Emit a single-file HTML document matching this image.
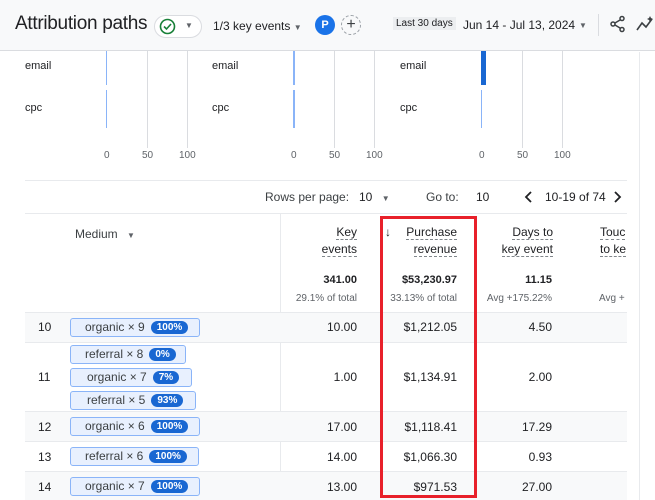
<!DOCTYPE html><html><head><style>
*{margin:0;padding:0;box-sizing:border-box}
body{width:655px;height:500px;overflow:hidden;background:#fff;font-family:"Liberation Sans",sans-serif;color:#202124;position:relative}
.a{position:absolute}
.hdr{left:0;top:0;width:655px;height:51px;background:#f8f9fa;border-bottom:1px solid #dadce0}
.t{font-size:12px}
.g{background:#dadce0;width:1px}
.ax{font-size:10px;color:#5f6368}
.chip{position:absolute;height:19px;border:1px solid #8ab4f8;background:#e8f0fe;border-radius:3px;font-size:12px;line-height:17px;padding-left:14px;color:#3c4043;white-space:nowrap}
.pill{display:inline-block;background:#1967d2;color:#fff;font-size:10px;font-weight:bold;border-radius:8px;padding:0 6px;line-height:13px;margin-left:6px;vertical-align:1px}
.r{text-align:right;font-size:12px}
.row{left:25px;width:602px;border-top:1px solid #e8eaed}
.dash{border-bottom:1px dashed #80868b;display:inline-block;line-height:14px;margin-bottom:2px}
</style></head><body>
<div class="a hdr"></div>
<div class="a" style="left:15px;top:13px;font-size:19px;letter-spacing:-0.3px">Attribution paths</div>
<div class="a" style="left:154px;top:15px;width:48px;height:23px;border:1px solid #dadce0;border-radius:12px;background:#fff"></div>
<svg class="a" style="left:159px;top:18px" width="17" height="17"><circle cx="8.5" cy="8.5" r="7" fill="none" stroke="#188038" stroke-width="1.6"/><path d="M5 8.5l2.5 2.5 4.5-5" fill="none" stroke="#188038" stroke-width="1.6"/></svg>
<div class="a" style="left:185px;top:21px;font-size:8px;color:#5f6368">▼</div>
<div class="a t" style="left:213px;top:19px">1/3 key events <span style="font-size:8px;color:#5f6368">▼</span></div>
<div class="a" style="left:315px;top:15px;width:20px;height:20px;background:#1a73e8;border-radius:50%;color:#fff;font-size:11px;text-align:center;line-height:20px;font-weight:bold">P</div>
<div class="a" style="left:341px;top:15px;width:20px;height:20px;border:1px dashed #9aa0a6;border-radius:50%;text-align:center;line-height:17px;font-size:16px;color:#3c4043">+</div>
<div class="a" style="left:393px;top:17px;background:#eceef0;font-size:10px;padding:1px 3px">Last 30 days</div>
<div class="a t" style="left:463px;top:18px">Jun 14 - Jul 13, 2024</div>
<div class="a" style="left:579px;top:21px;font-size:8px;color:#5f6368">▼</div>
<div class="a g" style="left:598px;top:14px;height:22px"></div>
<svg class="a" style="left:609px;top:15px" width="18" height="18"><circle cx="13" cy="3.5" r="2" fill="none" stroke="#3c4043" stroke-width="1.5"/><circle cx="4" cy="9" r="2" fill="none" stroke="#3c4043" stroke-width="1.5"/><circle cx="13" cy="14.5" r="2" fill="none" stroke="#3c4043" stroke-width="1.5"/><path d="M6 8L11 5M6 10L11 13" stroke="#3c4043" stroke-width="1.5"/></svg>
<svg class="a" style="left:636px;top:15px" width="19" height="18"><path d="M1 15L6 8L10 12L16 4" fill="none" stroke="#3c4043" stroke-width="1.6"/><path d="M14 1l1 2 2 1-2 1-1 2-1-2-2-1 2-1z" fill="#3c4043"/></svg>
<div class="a" style="left:639px;top:52px;width:1px;height:448px;background:#e8eaed"></div>

<div class="a t" style="left:25px;top:60px;font-size:11px">email</div><div class="a t" style="left:25px;top:102px;font-size:11px">cpc</div>
<div class="a t" style="left:212px;top:60px;font-size:11px">email</div><div class="a t" style="left:212px;top:102px;font-size:11px">cpc</div>
<div class="a t" style="left:400px;top:60px;font-size:11px">email</div><div class="a t" style="left:400px;top:102px;font-size:11px">cpc</div>
<div class="a g" style="left:147px;top:51px;height:97px"></div><div class="a g" style="left:187px;top:51px;height:97px"></div>
<div class="a g" style="left:334px;top:51px;height:97px"></div><div class="a g" style="left:374px;top:51px;height:97px"></div>
<div class="a g" style="left:522px;top:51px;height:97px"></div><div class="a g" style="left:562px;top:51px;height:97px"></div>
<div class="a" style="left:106px;top:51px;width:1px;height:34px;background:#8ab4f8"></div><div class="a" style="left:106px;top:90px;width:1px;height:38px;background:#8ab4f8"></div>
<div class="a" style="left:293px;top:51px;width:2px;height:34px;background:#8ab4f8"></div><div class="a" style="left:293px;top:90px;width:2px;height:38px;background:#8ab4f8"></div>
<div class="a" style="left:481px;top:51px;width:5px;height:34px;background:#1967d2"></div><div class="a" style="left:481px;top:90px;width:1px;height:38px;background:#8ab4f8"></div>
<div class="a ax" style="left:104px;top:150px">0</div><div class="a ax" style="left:142px;top:150px">50</div><div class="a ax" style="left:179px;top:150px">100</div>
<div class="a ax" style="left:291px;top:150px">0</div><div class="a ax" style="left:329px;top:150px">50</div><div class="a ax" style="left:366px;top:150px">100</div>
<div class="a ax" style="left:479px;top:150px">0</div><div class="a ax" style="left:517px;top:150px">50</div><div class="a ax" style="left:554px;top:150px">100</div>
<div class="a" style="left:25px;top:180px;width:602px;height:1px;background:#e8eaed"></div>

<div class="a t" style="left:265px;top:190px;color:#3c4043">Rows per page:</div>
<div class="a t" style="left:359px;top:190px">10 <span style="font-size:8px;color:#5f6368;margin-left:6px">▼</span></div>
<div class="a t" style="left:426px;top:190px;color:#3c4043">Go to:</div>
<div class="a t" style="left:476px;top:190px">10</div>
<svg class="a" style="left:524px;top:190px" width="10" height="14"><path d="M7 2L2 7l5 5" fill="none" stroke="#202124" stroke-width="1.8"/></svg>
<div class="a t" style="left:545px;top:190px">10-19 of 74</div>
<svg class="a" style="left:612px;top:190px" width="10" height="14"><path d="M3 2l5 5-5 5" fill="none" stroke="#202124" stroke-width="1.8"/></svg>

<div class="a row" style="top:213px;height:99px"></div>
<div class="a" style="left:280px;top:213px;width:1px;height:287px;background:#e8eaed"></div>
<div class="a t" style="left:75px;top:227px;color:#3c4043">Medium <span style="font-size:8px;color:#5f6368;margin-left:6px">▼</span></div>
<div class="a r" style="left:290px;top:225px;width:67px"><span class="dash">Key</span><br><span class="dash">events</span></div>
<div class="a" style="left:385px;top:225px;font-size:12px">↓</div>
<div class="a r" style="left:390px;top:225px;width:67px"><span class="dash">Purchase</span><br><span class="dash">revenue</span></div>
<div class="a r" style="left:480px;top:225px;width:73px"><span class="dash">Days to</span><br><span class="dash">key event</span></div>
<div class="a t" style="left:600px;top:225px"><span class="dash">Touc</span><br><span class="dash">to ke</span></div>
<div class="a r" style="left:290px;top:274px;width:67px;font-weight:bold;font-size:11px">341.00</div>
<div class="a r" style="left:280px;top:293px;width:77px;font-size:10px;color:#5f6368">29.1% of total</div>
<div class="a r" style="left:380px;top:274px;width:77px;font-weight:bold;font-size:11px">$53,230.97</div>
<div class="a r" style="left:380px;top:293px;width:77px;font-size:10px;color:#5f6368">33.13% of total</div>
<div class="a r" style="left:480px;top:274px;width:72px;font-weight:bold;font-size:11px">11.15</div>
<div class="a r" style="left:470px;top:293px;width:82px;font-size:10px;color:#5f6368">Avg +175.22%</div>
<div class="a" style="left:599px;top:293px;font-size:10px;color:#5f6368">Avg +</div>

<div class="a row" style="top:312px;height:30px;background:#f8f9fa"></div>
<div class="a row" style="top:342px;height:69px"></div>
<div class="a row" style="top:411px;height:30px;background:#f8f9fa"></div>
<div class="a row" style="top:441px;height:30px"></div>
<div class="a row" style="top:471px;height:29px;background:#f8f9fa"></div>

<div class="a t" style="left:38px;top:320px">10</div>
<div class="chip" style="left:70px;top:318px;width:130px">organic × 9<span class="pill">100%</span></div>
<div class="a r" style="left:300px;top:320px;width:57px">10.00</div>
<div class="a r" style="left:380px;top:320px;width:77px">$1,212.05</div>
<div class="a r" style="left:490px;top:320px;width:62px">4.50</div>

<div class="a t" style="left:38px;top:370px">11</div>
<div class="chip" style="left:70px;top:345px;width:116px">referral × 8<span class="pill">0%</span></div>
<div class="chip" style="left:70px;top:368px;width:122px;padding-left:16px">organic × 7<span class="pill">7%</span></div>
<div class="chip" style="left:70px;top:391px;width:126px;padding-left:16px">referral × 5<span class="pill">93%</span></div>
<div class="a r" style="left:300px;top:370px;width:57px">1.00</div>
<div class="a r" style="left:380px;top:370px;width:77px">$1,134.91</div>
<div class="a r" style="left:490px;top:370px;width:62px">2.00</div>

<div class="a t" style="left:38px;top:420px">12</div>
<div class="chip" style="left:70px;top:417px;width:130px">organic × 6<span class="pill">100%</span></div>
<div class="a r" style="left:300px;top:420px;width:57px">17.00</div>
<div class="a r" style="left:380px;top:420px;width:77px">$1,118.41</div>
<div class="a r" style="left:490px;top:420px;width:62px">17.29</div>

<div class="a t" style="left:38px;top:450px">13</div>
<div class="chip" style="left:70px;top:447px;width:129px">referral × 6<span class="pill">100%</span></div>
<div class="a r" style="left:300px;top:450px;width:57px">14.00</div>
<div class="a r" style="left:380px;top:450px;width:77px">$1,066.30</div>
<div class="a r" style="left:490px;top:450px;width:62px">0.93</div>

<div class="a t" style="left:38px;top:480px">14</div>
<div class="chip" style="left:70px;top:477px;width:130px">organic × 7<span class="pill">100%</span></div>
<div class="a r" style="left:300px;top:480px;width:57px">13.00</div>
<div class="a r" style="left:380px;top:480px;width:77px">$971.53</div>
<div class="a r" style="left:490px;top:480px;width:62px">27.00</div>

<div class="a" style="left:380px;top:216px;width:97px;height:282px;border:3px solid #e8202a"></div>
</body></html>
